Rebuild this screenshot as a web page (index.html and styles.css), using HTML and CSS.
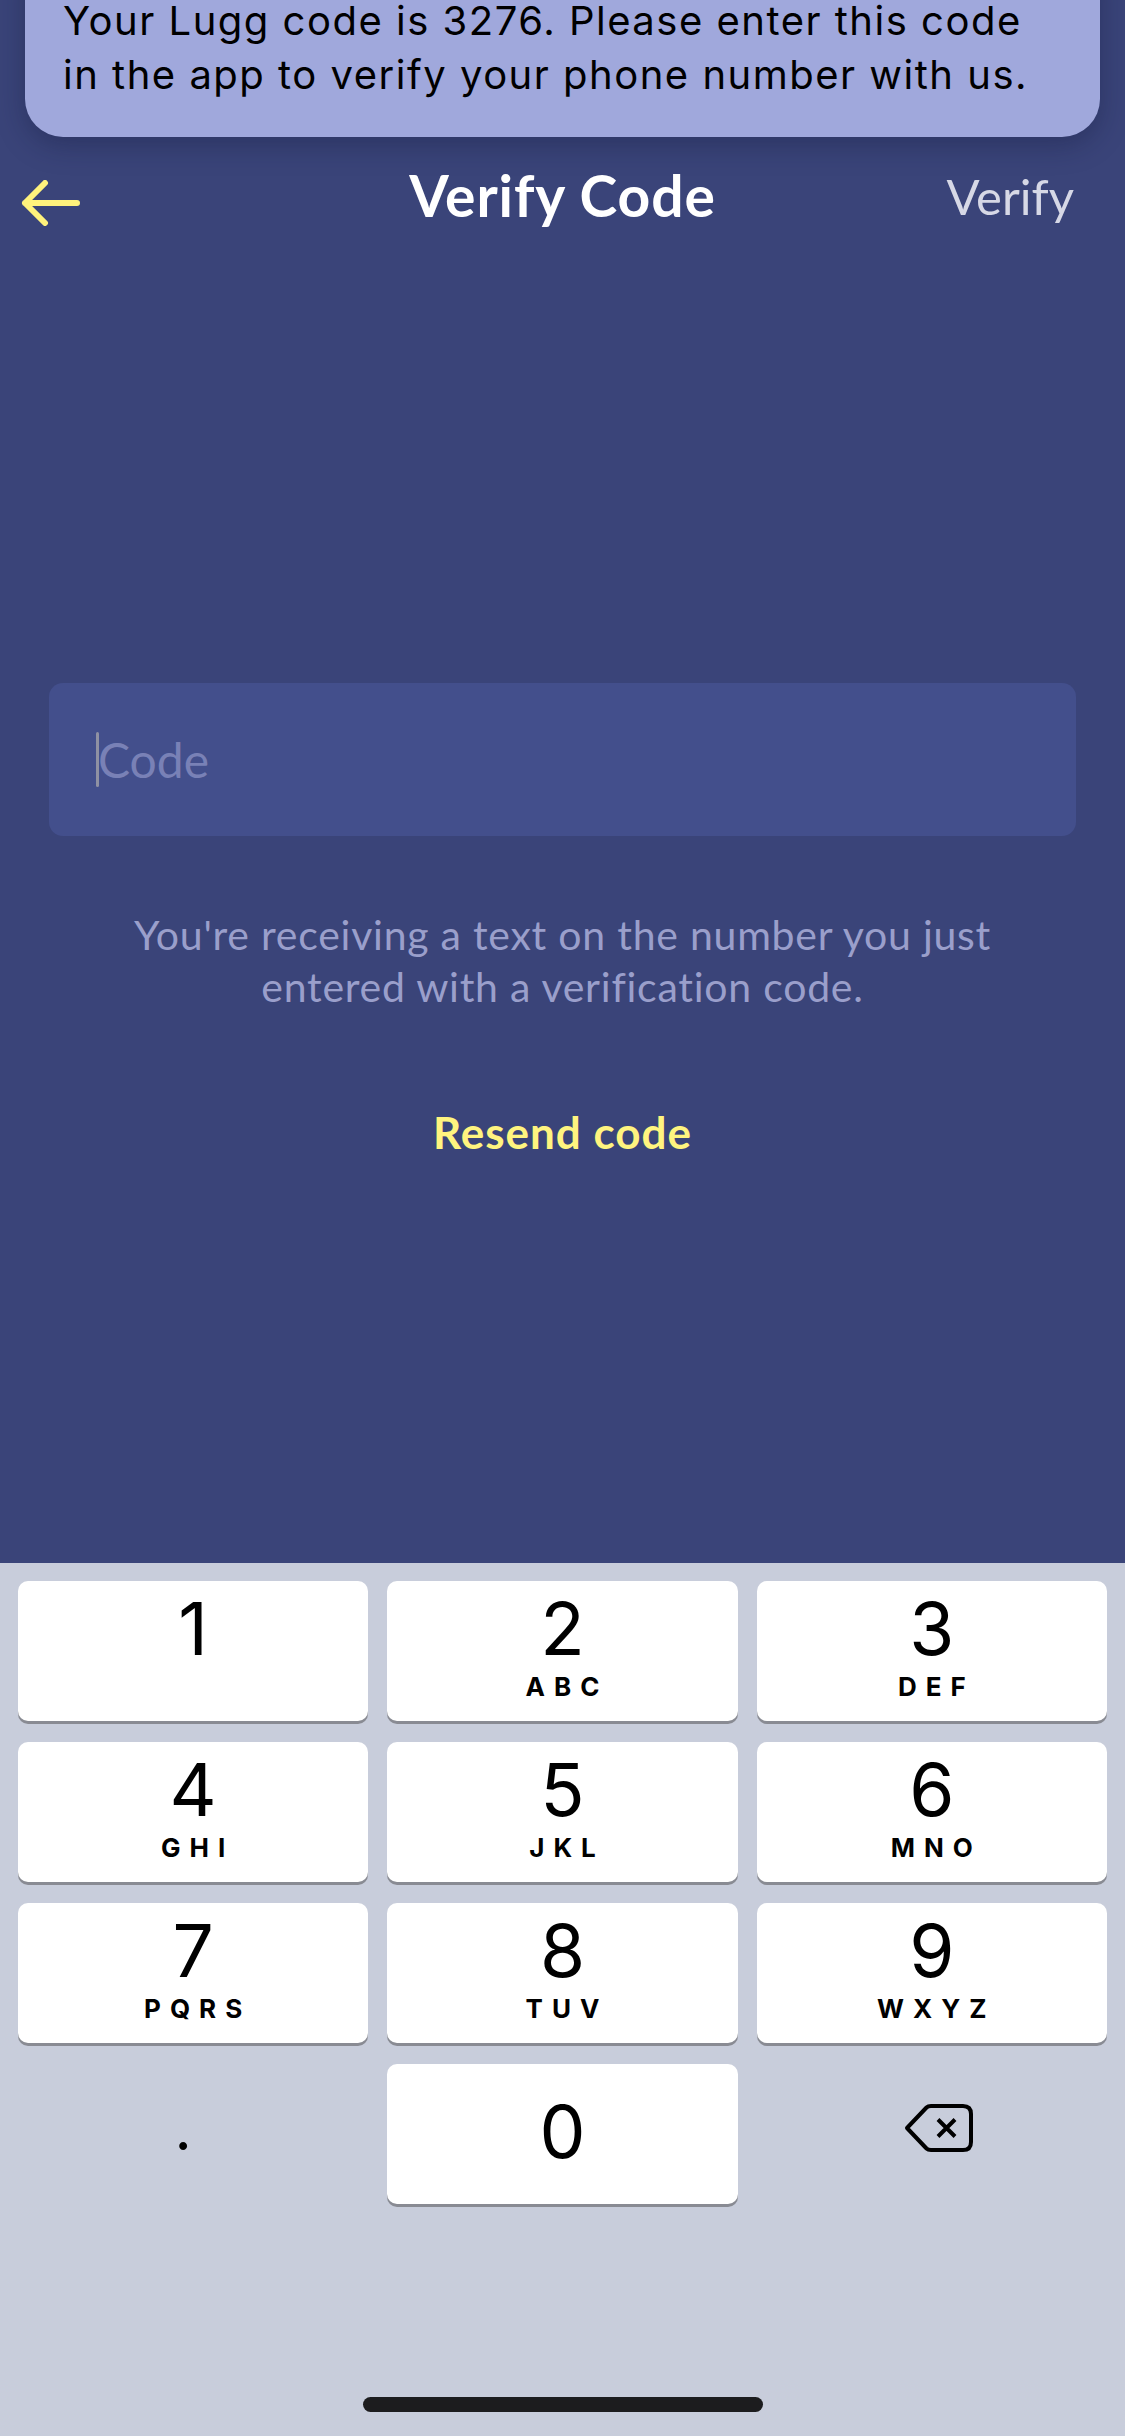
FILE: index.html
```html
<!DOCTYPE html>
<html lang="en">
<head>
<meta charset="utf-8">
<title>Verify Code</title>
<link rel="stylesheet" href="styles.css">
</head>
<body>
<div class="screen">
  <div class="banner">
    <p class="banner-text">Your Lugg code is 3276. Please enter this code<br>in the app to verify your phone number with us.</p>
  </div>

  <header class="nav">
    <div class="nav-left">
      <svg class="back" width="62" height="46" viewBox="0 0 62 46" aria-hidden="true">
        <path d="M57 23 H5 M25 3 L5 23 L25 43" fill="none" stroke="#fff27c" stroke-width="6" stroke-linecap="round" stroke-linejoin="round"/>
      </svg>
    </div>
    <h1 class="title">Verify Code</h1>
    <div class="nav-right"><span class="verify">Verify</span></div>
  </header>

  <main class="form">
    <div class="field"><span class="caret"></span><span class="placeholder">Code</span></div>
    <p class="hint">You're receiving a text on the number you just<br>entered with a verification code.</p>
    <p class="resend">Resend code</p>
  </main>

  <section class="keyboard">
    <div class="keys">
      <div class="key"><span class="num">1</span></div>
      <div class="key"><span class="num">2</span><span class="letters">ABC</span></div>
      <div class="key"><span class="num">3</span><span class="letters">DEF</span></div>
      <div class="key"><span class="num">4</span><span class="letters">GHI</span></div>
      <div class="key"><span class="num">5</span><span class="letters">JKL</span></div>
      <div class="key"><span class="num">6</span><span class="letters">MNO</span></div>
      <div class="key"><span class="num">7</span><span class="letters">PQRS</span></div>
      <div class="key"><span class="num">8</span><span class="letters">TUV</span></div>
      <div class="key"><span class="num">9</span><span class="letters">WXYZ</span></div>
      <div class="key key-blank"><span class="dot">.</span></div>
      <div class="key key-zero"><span class="num">0</span></div>
      <div class="key key-blank">
        <svg class="backspace" width="72" height="52" viewBox="0 0 72 52" aria-hidden="true">
          <path d="M4 26 L23.5 5.5 Q25 4 28 4 H60 Q68 4 68 12 V40 Q68 48 60 48 H28 Q25 48 23.5 46.5 Z" fill="none" stroke="#000" stroke-width="4" stroke-linejoin="round"/>
          <path d="M35 17.5 L52 34.5 M52 17.5 L35 34.5" fill="none" stroke="#000" stroke-width="4"/>
        </svg>
      </div>
    </div>
    <div class="home-bar"></div>
  </section>
</div>
</body>
</html>
```

FILE: styles.css
```css
* {
  box-sizing: border-box;
}

html, body {
  margin: 0;
  padding: 0;
}

body {
  width: 1125px;
  height: 2436px;
  overflow: hidden;
  background: #3a4479;
  font-family: Lato, "Open Sans", sans-serif;
}

.screen {
  position: relative;
  width: 1125px;
  height: 2436px;
  display: flex;
  flex-direction: column;
}

/* notification banner overlaying the top */
.banner {
  position: absolute;
  top: -60px;
  left: 25px;
  right: 25px;
  padding: 54px 30px 35px 38px;
  background: #a0a8dc;
  border-radius: 38px;
  box-shadow: 0 8px 28px rgba(18, 22, 56, 0.35);
  z-index: 2;
}

.banner-text {
  margin: 0;
  font-family: Inter, "Liberation Sans", sans-serif;
  font-size: 40px;
  line-height: 54px;
  letter-spacing: 1.5px;
  color: #000;
  white-space: nowrap;
}

/* navigation */
.nav {
  margin-top: 153px;
  height: 100px;
  display: grid;
  grid-template-columns: 1fr auto 1fr;
  align-items: center;
}

.nav-left {
  padding-left: 20px;
  display: flex;
  align-items: center;
}

.back {
  display: block;
}

.title {
  margin: 0 0 16px;
  font-size: 57px;
  line-height: 57px;
  font-weight: 700;
  letter-spacing: 0.9px;
  color: #fff;
  text-align: center;
}

.nav-right {
  padding-right: 51px;
  text-align: right;
  margin-bottom: 14px;
}

.verify {
  font-size: 49px;
  line-height: 49px;
  font-weight: 400;
  color: #d6d8e6;
}

/* form */
.form {
  flex: 1;
  display: flex;
  flex-direction: column;
  align-items: center;
}

.field {
  margin-top: 430px;
  width: 1027px;
  height: 153px;
  border-radius: 14px;
  background: #434f8c;
  display: flex;
  align-items: center;
  padding-left: 47px;
}

.caret {
  width: 3px;
  height: 55px;
  border-radius: 2px;
  background: #8f91a3;
}

.placeholder {
  font-size: 48px;
  line-height: 48px;
  color: #7981b6;
  margin-left: -1px;
}

.hint {
  margin: 73px 0 0;
  font-size: 41px;
  line-height: 52px;
  letter-spacing: 0.75px;
  text-align: center;
  color: #9a9fcb;
}

.resend {
  margin: 97px 0 0;
  font-size: 44px;
  line-height: 44px;
  font-weight: 700;
  letter-spacing: 1px;
  color: #fff47f;
}

/* keyboard */
.keyboard {
  height: 873px;
  background: #c8cddb;
  display: flex;
  flex-direction: column;
  padding-top: 18px;
}

.keys {
  display: grid;
  grid-template-columns: repeat(3, 1fr);
  column-gap: 19px;
  row-gap: 21px;
  padding: 0 18px;
}

.key {
  height: 140px;
  background: #fff;
  border-radius: 10px;
  box-shadow: 0 3px 0 #898b93;
  display: flex;
  flex-direction: column;
  align-items: center;
  padding-top: 11px;
  color: #000;
  font-family: Inter, "Liberation Sans", sans-serif;
}

.num {
  font-size: 73px;
  line-height: 73px;
  font-weight: 400;
}

.letters {
  margin-top: 9px;
  font-size: 26px;
  line-height: 26px;
  font-weight: 700;
  letter-spacing: 9px;
  padding-left: 9px;
}

.key-zero {
  justify-content: center;
  padding-top: 0;
  padding-bottom: 6px;
}

.key-blank {
  background: transparent;
  box-shadow: none;
  justify-content: center;
  padding-top: 0;
  padding-bottom: 12px;
}

.dot {
  font-size: 60px;
  line-height: 60px;
  margin-right: 20px;
}

.backspace {
  display: block;
  margin-left: 14px;
}

.home-bar {
  margin: auto auto 24px;
  width: 400px;
  height: 15px;
  border-radius: 8px;
  background: #1c1c1e;
}
```
